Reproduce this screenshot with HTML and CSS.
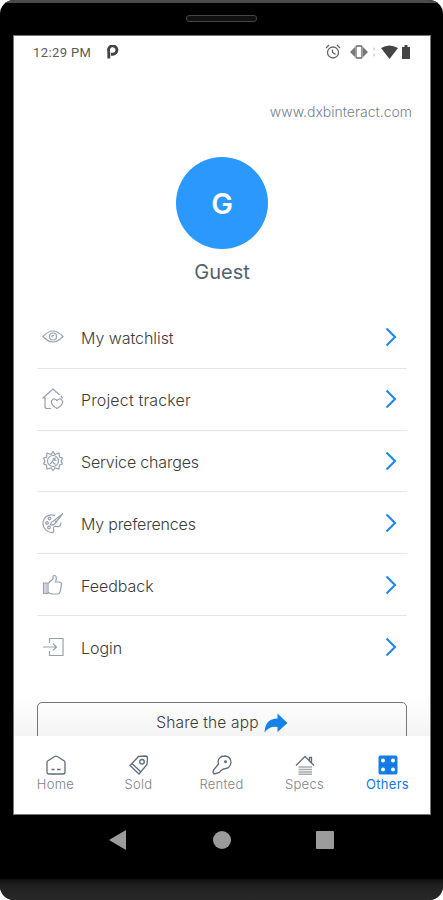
FILE: index.html
```html
<!DOCTYPE html>
<html lang="en">
<head>
  <meta charset="UTF-8">
  <meta name="viewport" content="width=device-width, initial-scale=1.0">
  <title>Others</title>
  <link rel="stylesheet" href="styles.css">
</head>
<body>
  <div class="phone">
    <div class="phone-top"><span class="speaker"></span></div>

    <div class="screen">
      <header class="status">
        <span class="time">12:29 PM</span>
        <svg class="parking" width="12" height="14" viewBox="0 0 12 14"><path d="M1.800 13.500V6.500M1.800 6.500A4.200 4.200 0 1 1 6 9.200H4" fill="none" stroke="#444" stroke-width="2.900"/></svg>
        <svg class="status-icons" width="88" height="18" viewBox="0 0 88 18">
          <g fill="none" stroke="#666" stroke-width="1.300">
            <circle cx="10" cy="9.500" r="5.500"/>
            <path d="M3 5l3-3M14 2l3 3M9.500 6.500v3l3 2"/>
            <rect x="33" y="3" width="6" height="12" rx="1"/>
          </g>
          <path d="M32 4v10l-5-5zM40 4v10l5-5z" fill="#777"/>
          <path d="M50.500 4l2 2-2 2zM50.500 10l2 2-2 2z" fill="#ccc"/>
          <path d="M58 5q8.500-5 17 0l-8.500 11z" fill="#444"/>
          <path d="M79 4h2.500V2h3v2H87v12h-8z" fill="#444"/>
        </svg>
      </header>

      <main class="content">
        <div class="site">www.dxbinteract.com</div>
        <div class="avatar">G</div>
        <div class="name">Guest</div>

        <ul class="menu">
          <li class="row">
            <svg class="icon" viewBox="0 0 22 22"><path d="M1 10.500Q11-.5 21 10.500 11 21.500 1 10.500z"/><circle cx="11" cy="10.500" r="3.500"/><path d="M10 11.500q-.5-2.500 2-2"/></svg>
            <span class="label">My watchlist</span>
            <svg class="chevron" viewBox="0 0 12 20"><path d="M1.500 1.500L10 10l-8.500 8.500"/></svg>
          </li>
          <li class="row">
            <svg class="icon" viewBox="0 0 22 22"><path d="M9 20.500H5q-2 0-2-2V10H1L11 1l6.500 6M19 8l1.500 2.500"/><path d="M15 20.500q-6.500-4-5.500-7.500 2-4 5.500-.5 3.500-3.500 5.500.5 1 3.500-5.500 7.500z"/></svg>
            <span class="label wide">Project tracker</span>
            <svg class="chevron" viewBox="0 0 12 20"><path d="M1.500 1.500L10 10l-8.500 8.500"/></svg>
          </li>
          <li class="row">
            <svg class="icon" viewBox="0 0 22 22"><path d="M11 1.500l2 3 4-1.500.5 4 3 1-1.500 3 1.500 3-3 1-.5 4-4-1-2 2.500-2-2.500-4 1-.5-4-3-1L3 11 1.500 8l3-1L5 3l4 1.500z"/><circle cx="11" cy="11" r="5.500"/><path d="M8 14l3-3q-.5-2.500 2-3l-.5 2 2 .500M11 12.500l2.500 2"/></svg>
            <span class="label narrow">Service charges</span>
            <svg class="chevron" viewBox="0 0 12 20"><path d="M1.500 1.500L10 10l-8.500 8.500"/></svg>
          </li>
          <li class="row">
            <svg class="icon" viewBox="0 0 22 22"><path d="M13 3.500C6 1 1 6 1 11.500S5.500 20 9 20.500q4 .5 2.500-3.500-.5-3 3-2.500 4.500 1 4.500-4"/><path d="M21 1.500l-9.500 7.500q-2.500.5-3 4 4.500.5 5-2.500L21 1.500zM13 9l2 1.500"/><circle cx="5" cy="11" r="1.300"/><circle cx="7.500" cy="6.500" r="1.300"/><circle cx="7" cy="15.500" r="1.300"/></svg>
            <span class="label narrow">My preferences</span>
            <svg class="chevron" viewBox="0 0 12 20"><path d="M1.500 1.500L10 10l-8.500 8.500"/></svg>
          </li>
          <li class="row">
            <svg class="icon" viewBox="0 0 22 22"><path d="M6 9.500l5-4.500V2.500q1.500-2.500 3 0 1 2-.5 5.500h4q2.500.5 2 3L18 18q-.5 2-2.500 2H10l-4-1.500zM1.500 9H6v10.500H1.500z"/><path d="M3 9v10M4.500 9v10" opacity=".6"/></svg>
            <span class="label">Feedback</span>
            <svg class="chevron" viewBox="0 0 12 20"><path d="M1.500 1.500L10 10l-8.500 8.500"/></svg>
          </li>
          <li class="row">
            <svg class="icon" viewBox="0 0 22 22"><path d="M7.500 7V2.500H21v17H7.500V15M1 11h13M11 7.500l3.500 3.500-3.500 3.500"/></svg>
            <span class="label">Login</span>
            <svg class="chevron" viewBox="0 0 12 20"><path d="M1.500 1.500L10 10l-8.500 8.500"/></svg>
          </li>
        </ul>

        <div class="share-area">
          <div class="share">
            <span class="share-text">Share the app</span>
            <svg width="24" height="20" viewBox="0 0 24 20"><path d="M.5 19.500Q1 5.500 13.500 5.500V.5L23.500 10 13.500 19v-5Q5 13 .5 19.500z" fill="#1681e8"/></svg>
          </div>
        </div>
      </main>

      <nav class="tabs">
        <div class="tab">
          <svg class="tab-icon" viewBox="0 0 20 20"><path d="M1 7.500q0-1 1-1.800L8.700 1.500Q10 .8 11.300 1.500L18 5.700q1 .8 1 1.800V17q0 2-2 2H3q-2 0-2-2z"/><path d="M5.500 14.500h3M11 14.500h3.500"/></svg>
          <span>Home</span>
        </div>
        <div class="tab">
          <svg class="tab-icon" viewBox="0 0 20 20"><path d="M1 10.500l8.500-9 7-.5q2 0 2 2.500l-.5 6L10 19zM3 8.500l9 8.500"/><circle cx="13" cy="6.800" r="2.300"/></svg>
          <span>Sold</span>
        </div>
        <div class="tab">
          <svg class="tab-icon" viewBox="0 0 20 20"><path d="M6.500 9C5 4 8.500 1 13 1q6 .5 6 6.500-.5 6-7.500 6.500l-3 2-1 1.500-5.500 1.500q-1.500-1-.5-4z"/><circle cx="13.500" cy="6.800" r=".8"/></svg>
          <span>Rented</span>
        </div>
        <div class="tab">
          <svg class="tab-icon" viewBox="0 0 20 20"><path d="M1 10.500l9-9 9 9M14.500 5.500V2.500h2V8"/><path d="M3.500 12h13.500M3.500 14.500h13.500M3.500 17h13.500M3.500 19.300h13.500" stroke="#a3abad" stroke-width="1.600"/></svg>
          <span>Specs</span>
        </div>
        <div class="tab active">
          <svg class="tab-icon" viewBox="0 0 20 20"><rect x=".5" y=".5" width="19" height="19" rx="2" fill="#137de8" stroke="none"/><g fill="#fff" stroke="none"><circle cx="5" cy="5.500" r="2"/><circle cx="15" cy="5.500" r="2"/><circle cx="5" cy="14.500" r="2"/><circle cx="15" cy="14.500" r="2"/></g><path d="M10 1v18M1 10h18" stroke="#0d6fd3" stroke-width=".6"/></svg>
          <span>Others</span>
        </div>
      </nav>
    </div>

    <div class="android">
      <svg width="18" height="20" viewBox="0 0 18 20"><path d="M0 10L17 0v20z"/></svg>
      <svg width="18" height="18" viewBox="0 0 18 18"><circle cx="9" cy="9" r="9"/></svg>
      <svg width="18" height="18" viewBox="0 0 18 18"><rect width="18" height="18" rx="1"/></svg>
    </div>
    <div class="phone-bottom"></div>
  </div>
</body>
</html>
```
FILE: styles.css
```css
* {
  box-sizing: border-box;
}

body {
  margin: 0;
  background: #fff;
  font-family: "Inter", "Roboto", sans-serif;
}

svg {
  display: block;
  flex: none;
}

.phone {
  width: 443px;
  height: 900px;
  display: flex;
  flex-direction: column;
  background: #000;
  border-radius: 14px;
  overflow: hidden;
}

.phone-top {
  height: 35px;
  border-top: 3px solid #4b4b4b;
  display: flex;
  justify-content: center;
  padding-top: 12px;
}

.speaker {
  width: 71px;
  height: 7px;
  border: 1px solid #444;
  border-radius: 3px;
  background: #111;
}

.screen {
  width: 418px;
  height: 780px;
  margin-left: 13px;
  background: #fff;
  border: 1px solid #777;
  display: flex;
  flex-direction: column;
}

.status {
  height: 31px;
  display: flex;
  align-items: center;
  padding: 1px 19px 0 19px;
}

.time {
  width: 74px;
  font: 13px "Roboto", sans-serif;
  letter-spacing: 0.4px;
  color: #5c5c5c;
}

.status-icons {
  margin-left: auto;
}

.content {
  height: 669px;
  overflow: hidden;
}

.site {
  margin: 36px 18px 0 0;
  text-align: right;
  font-size: 14px;
  font-weight: 300;
  line-height: 18px;
  color: #748190;
}

.avatar {
  width: 92px;
  height: 92px;
  margin: 36px auto 0;
  border-radius: 50%;
  background: #2b98fd;
  color: #fff;
  font-size: 29px;
  font-weight: 600;
  line-height: 93px;
  text-align: center;
}

.name {
  margin-top: 11px;
  text-align: center;
  font-size: 20px;
  line-height: 24px;
  color: #53616e;
}

.menu {
  list-style: none;
  margin: 23px 23px 0;
  padding: 0;
}

.row {
  height: 61.8px;
  display: flex;
  align-items: center;
  padding: 0 10px 0 5px;
  border-bottom: 1px solid #e3e7e9;
}

.row:last-child {
  height: 63px;
  border-bottom: 0;
}

.icon {
  width: 22px;
  height: 22px;
  fill: none;
  stroke: #95a2ae;
  stroke-width: 1.2;
}

.label {
  margin-left: 17px;
  padding-top: 2px;
  font-size: 16px;
  font-weight: 300;
  letter-spacing: -0.05px;
  color: #3b3b3b;
}

.wide {
  letter-spacing: 0.15px;
}

.narrow {
  letter-spacing: -0.18px;
}

.chevron {
  width: 12px;
  height: 20px;
  margin-left: auto;
  fill: none;
  stroke: #2589ee;
  stroke-width: 2.2;
}

.share-area {
  height: 60px;
  padding: 23px 23px 0;
  background: linear-gradient(#fff 30%, #f3f3f3);
}

.share {
  height: 60px;
  border: 1px solid #777;
  border-radius: 5px;
  display: flex;
  justify-content: center;
  padding-top: 10px;
  gap: 5px;
}

.share-text {
  font-size: 15.5px;
  font-weight: 300;
  line-height: 20px;
  letter-spacing: 0.15px;
  color: #3b3b3b;
}

.tabs {
  height: 78px;
  display: flex;
  padding-top: 19px;
  background: #fff;
}

.tab {
  width: 83px;
  display: flex;
  flex-direction: column;
  align-items: center;
  font-size: 13px;
  font-weight: 300;
  line-height: 19px;
  letter-spacing: 0.3px;
  color: #7b8388;
}

.tab-icon {
  width: 20px;
  height: 20px;
  fill: none;
  stroke: #5f6d78;
  stroke-width: 1.3;
}

.active {
  color: #1475ec;
  font-weight: 400;
}

.android {
  height: 64px;
  padding: 0 109px 15px;
  display: flex;
  align-items: center;
  justify-content: space-between;
  fill: #9b9b9b;
}

.phone-bottom {
  height: 21px;
  background: linear-gradient(#101010, #202020 30%, #282828);
}
```
